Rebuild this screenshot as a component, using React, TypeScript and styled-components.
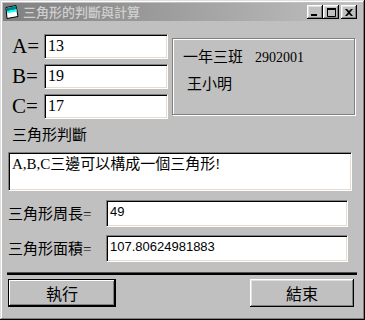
import styled, { createGlobalStyle } from "styled-components";

const GlobalStyle = createGlobalStyle`
  html, body {
    margin: 0;
    padding: 0;
    background: #c0c0c0;
  }
  * {
    box-sizing: border-box;
  }
`;

const FONT = `"Liberation Serif", "Noto Sans CJK TC", serif`;

const Win = {
  Frame: styled.div`
    width: 365px;
    height: 320px;
    padding: 3px;
    background: #c0c0c0;
    box-shadow: inset -1px -1px #000, inset 1px 1px #dfdfdf,
      inset -2px -2px #808080, inset 2px 2px #fff;
    display: flex;
    flex-direction: column;
    font-family: ${FONT};
    color: #000;
  `,
  TitleBar: styled.div`
    height: 18px;
    display: flex;
    align-items: center;
    padding: 0 5px 0 1px;
    background: linear-gradient(to right, #808080, #c0c0c0);
  `,
  Title: styled.span`
    flex: 1;
    margin-left: 3px;
    font-family: "Noto Sans CJK TC", sans-serif;
    font-size: 13px;
    font-weight: 500;
    color: #d0d0d0;
    white-space: nowrap;
    line-height: 18px;
  `,
  CtrlButton: styled.button<{ $gap?: number }>`
    width: 16px;
    height: 14px;
    padding: 0;
    margin-left: ${(p) => p.$gap ?? 0}px;
    border: none;
    background: #c0c0c0;
    box-shadow: inset -1px -1px #000, inset 1px 1px #fff,
      inset -2px -2px #808080, inset 2px 2px #dfdfdf;
    display: flex;
    align-items: center;
    justify-content: center;
  `,
  Client: styled.div`
    flex: 1;
    display: flex;
    flex-direction: column;
    padding: 0 5px;
  `,
};

const Form = {
  Top: styled.div`
    margin-top: 13px;
    display: flex;
    align-items: flex-start;
    padding-left: 4px;
  `,
  Fields: styled.div`
    display: flex;
    flex-direction: column;
    gap: 5px;
  `,
  FieldRow: styled.div`
    display: flex;
    align-items: center;
    height: 25px;
  `,
  BigLabel: styled.span`
    width: 32px;
    font-size: 21px;
    line-height: 25px;
    font-family: "Liberation Serif", serif;
  `,
  Input: styled.div<{ $w: number; $h: number; $sans?: boolean }>`
    width: ${(p) => p.$w}px;
    height: ${(p) => p.$h}px;
    background: #fff;
    border: 1px solid;
    border-color: #808080 #fff #fff #808080;
    box-shadow: inset 1px 1px #000, inset -1px -1px #e8dcd0;
    padding: 2px 3px;
    font-family: ${(p) => (p.$sans ? `"Liberation Sans", sans-serif` : FONT)};
    font-size: ${(p) => (p.$sans ? 13 : 16)}px;
    line-height: 18px;
  `,
  Group: styled.div`
    margin: 4px 0 0 4px;
    width: 183px;
    height: 77px;
    border: 1px solid #808080;
    box-shadow: inset 1px 1px #fff, 1px 1px #fff;
    padding: 9px 0 0 10px;
    display: flex;
    flex-direction: column;
    gap: 8px;
  `,
  GroupLine: styled.div<{ $indent?: number }>`
    padding-left: ${(p) => p.$indent ?? 0}px;
    font-size: 15px;
    line-height: 18px;
    white-space: nowrap;
  `,
  Id: styled.span`
    font-size: 14px;
    margin-left: 12px;
  `,
  Caption: styled.div`
    margin-top: 7px;
    padding-left: 4px;
    font-size: 15px;
    line-height: 18px;
  `,
  Result: styled.div`
    margin-top: 8px;
  `,
  CalcRow: styled.div<{ $top: number }>`
    margin-top: ${(p) => p.$top}px;
    display: flex;
    align-items: center;
  `,
  CalcLabel: styled.span`
    width: 98px;
    font-size: 15px;
    line-height: 18px;
    white-space: nowrap;
  `,
  Separator: styled.div`
    margin: 11px 0 0 -1px;
    width: 350px;
    height: 2px;
    background: #000;
    box-shadow: 0 -1px #505050;
  `,
  Buttons: styled.div`
    margin-top: 4px;
    display: flex;
    justify-content: space-between;
    padding-right: 3px;
  `,
  Button: styled.button<{ $w: number; $default?: boolean }>`
    width: ${(p) => p.$w}px;
    height: 28px;
    padding: 0;
    background: #c0c0c0;
    font-family: ${FONT};
    font-size: 16px;
    color: #000;
    border: ${(p) => (p.$default ? "1px solid #000" : "none")};
    box-shadow: ${(p) =>
      p.$default
        ? "inset -1px -1px #000, inset 1px 1px #fff, inset -2px -2px #808080"
        : "inset -1px -1px #000, inset 1px 1px #fff, inset -2px -2px #808080, inset 2px 2px #dfdfdf"};
  `,
};

const AppIcon = () => (
  <svg width="16" height="16" viewBox="0 0 16 16">
    <path d="M2 3.5 L12 1.5 L14 12.5 L3 14.5 Z" fill="#fff" stroke="#000" />
    <path d="M2.5 4 L12 2 L12.6 5.2 L3 7.2 Z" fill="#008080" />
    <path d="M3 7.2 L12.6 5.2 L13 7.2 L3.4 9.2 Z" fill="#00ffff" />
  </svg>
);

const MinGlyph = () => (
  <svg width="8" height="8" viewBox="0 0 8 8">
    <rect x="0" y="6" width="6" height="2" fill="#000" />
  </svg>
);

const MaxGlyph = () => (
  <svg width="9" height="9" viewBox="0 0 9 9">
    <path d="M0.5 0.5h8v8h-8z" fill="none" stroke="#000" />
    <rect x="0" y="0" width="9" height="2" fill="#000" />
  </svg>
);

const CloseGlyph = () => (
  <svg width="8" height="7" viewBox="0 0 8 7">
    <path d="M0 0h2l2 2 2-2h2L5 3.5 8 7H6L4 5 2 7H0l3-3.5z" fill="#000" />
  </svg>
);

export default function App() {
  const fields = [
    { label: "A=", value: "13" },
    { label: "B=", value: "19" },
    { label: "C=", value: "17" },
  ];
  return (
    <>
      <GlobalStyle />
      <Win.Frame>
        <Win.TitleBar>
          <AppIcon />
          <Win.Title>三角形的判斷與計算</Win.Title>
          <Win.CtrlButton>
            <MinGlyph />
          </Win.CtrlButton>
          <Win.CtrlButton>
            <MaxGlyph />
          </Win.CtrlButton>
          <Win.CtrlButton $gap={2}>
            <CloseGlyph />
          </Win.CtrlButton>
        </Win.TitleBar>
        <Win.Client>
          <Form.Top>
            <Form.Fields>
              {fields.map((f) => (
                <Form.FieldRow key={f.label}>
                  <Form.BigLabel>{f.label}</Form.BigLabel>
                  <Form.Input $w={124} $h={25}>
                    {f.value}
                  </Form.Input>
                </Form.FieldRow>
              ))}
            </Form.Fields>
            <Form.Group>
              <Form.GroupLine>
                一年三班<Form.Id>2902001</Form.Id>
              </Form.GroupLine>
              <Form.GroupLine $indent={4}>王小明</Form.GroupLine>
            </Form.Group>
          </Form.Top>
          <Form.Caption>三角形判斷</Form.Caption>
          <Form.Result>
            <Form.Input $w={344} $h={39} style={{ fontSize: 15 }}>
              A,B,C三邊可以構成一個三角形!
            </Form.Input>
          </Form.Result>
          <Form.CalcRow $top={9}>
            <Form.CalcLabel>三角形周長=</Form.CalcLabel>
            <Form.Input $w={242} $h={27} $sans>
              49
            </Form.Input>
          </Form.CalcRow>
          <Form.CalcRow $top={8}>
            <Form.CalcLabel>三角形面積=</Form.CalcLabel>
            <Form.Input $w={242} $h={27} $sans>
              107.80624981883
            </Form.Input>
          </Form.CalcRow>
          <Form.Separator />
          <Form.Buttons>
            <Form.Button $w={108} $default>
              執行
            </Form.Button>
            <Form.Button $w={104}>結束</Form.Button>
          </Form.Buttons>
        </Win.Client>
      </Win.Frame>
    </>
  );
}
